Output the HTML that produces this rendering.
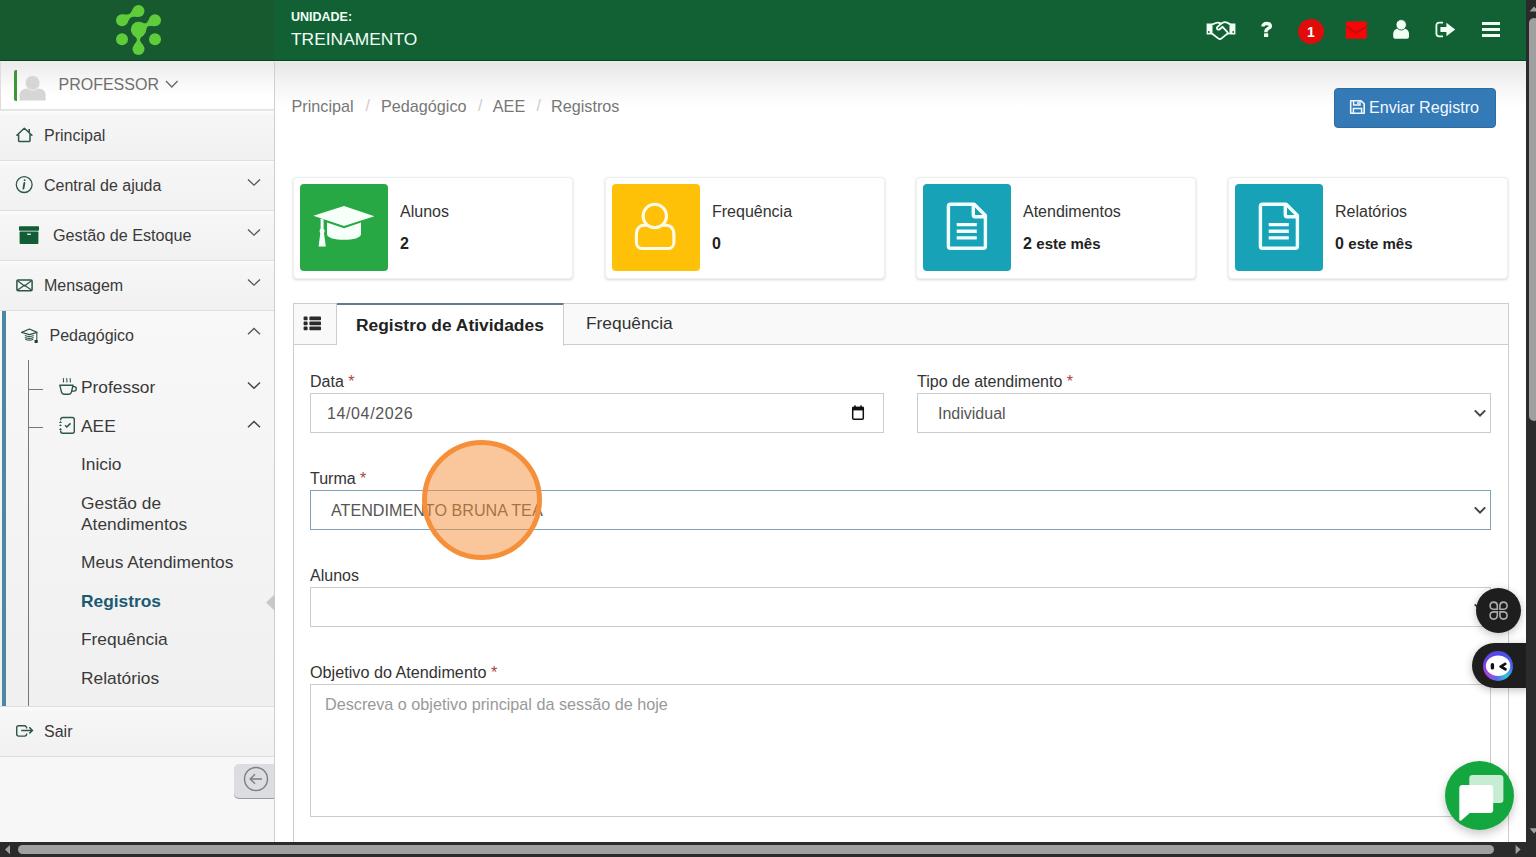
<!DOCTYPE html>
<html lang="pt">
<head>
<meta charset="utf-8">
<style>
*{box-sizing:border-box;margin:0;padding:0}
html,body{width:1536px;height:857px;overflow:hidden;background:#fff;font-family:"Liberation Sans",sans-serif;color:#333}
.a{position:absolute}
.nw{white-space:nowrap}
/* header */
#hdr{position:absolute;left:0;top:0;width:1526px;height:61px;background:#116135;border-bottom:1px solid #0c3f22}
#logo{position:absolute;left:0;top:0;width:274px;height:60px;background:#175a30}
.unid{left:291px;top:10px;color:#f2fff5;font-weight:bold;font-size:12.5px;line-height:14px}
.trein{left:291px;top:29px;color:#f2fff5;font-size:17.4px;line-height:20px}
/* sidebar */
#side{position:absolute;left:0;top:61px;width:275px;height:781px;background:#f7f7f7;border-right:1px solid #cfcfcf}
.prof{position:absolute;left:0;top:61px;width:274px;height:49px;background:linear-gradient(#ebebeb,#fff 70%);border-bottom:1px solid #e3e3e3;border-left:1px solid #ddd}
.mi{position:absolute;left:0;width:274px;height:50px;border-top:1px solid #dedede;background:linear-gradient(#fcfcfc,#f6f6f6 10%,#f1f1f1)}
.st{position:absolute;font-size:16px;color:#3a3a3a;line-height:18px;white-space:nowrap}
.sub{position:absolute;left:81px;font-size:17.35px;color:#3a3a3a;line-height:21px;white-space:nowrap}
.ico{position:absolute;overflow:visible}
/* main */
.topshade{left:275px;top:61px;width:1251px;height:46px;background:linear-gradient(#e6e6e6,#f3f3f3 45%,#fff)}
.crumb{top:97px;font-size:16.2px;color:#777;line-height:18px}
.sep{top:97px;font-size:16px;color:#ccc;line-height:18px}
.btn{left:1334px;top:88px;width:162px;height:40px;background:#337ab7;border-radius:4px;border:1px solid #2e6da4}
.card{position:absolute;top:177px;width:280px;height:101.5px;background:#fff;border:1px solid #efefef;border-radius:4px;box-shadow:0 1px 3px rgba(0,0,0,.16)}
.card .ib{position:absolute;left:6px;top:6px;width:88px;height:86.8px;border-radius:4px}
.card .l1{position:absolute;left:106px;top:25px;font-size:16px;color:#333;line-height:18px;white-space:nowrap}
.card .l2{position:absolute;left:106px;top:57px;font-size:16px;color:#222;font-weight:bold;line-height:18px;white-space:nowrap}
.card .l2 small{font-size:15px}
.panel{left:293px;top:303px;width:1216px;height:560px;border:1px solid #cdcdcd;background:#fff}
.tabbar{left:294px;top:304px;width:1214px;height:41px;background:#f9f9f9;border-bottom:1px solid #cdcdcd}
.lbl{position:absolute;font-size:16px;color:#333;line-height:18px;white-space:nowrap}
.lbl i{font-style:normal;color:#a94442}
.inp{position:absolute;border:1px solid #ccc;background:#fff}
.itxt{position:absolute;font-size:16px;color:#555;line-height:18px;white-space:nowrap}
/* scrollbars */
#vs{position:absolute;left:1526px;top:0;width:10px;height:857px;background:#2b2b2b}
#hs{position:absolute;left:0;top:842px;width:1526px;height:15px;background:#2b2b2b}
</style>
</head>
<body>
<!-- HEADER -->
<div id="hdr">
  <div id="logo"></div>
  <svg class="a" style="left:0;top:0" width="274" height="60" viewBox="0 0 274 60">
    <g fill="#5fcc3c">
      <circle cx="138.5" cy="11" r="6"/>
      <circle cx="122" cy="20.3" r="6"/>
      <circle cx="155" cy="20.3" r="6"/>
      <circle cx="138.5" cy="29.5" r="7.7"/>
      <circle cx="122" cy="39.2" r="6"/>
      <circle cx="155" cy="39.2" r="6"/>
      <circle cx="138.5" cy="49" r="6"/>
      <path d="M127.16 23.35 C130.71 16.46 130.71 16.46 138.44 17.00 L133.34 7.95 C129.79 14.84 129.79 14.84 122.06 14.30 Z"/>
      <path d="M145.43 32.86 C147.07 25.48 147.07 25.48 154.39 26.27 L149.60 17.68 C146.43 24.32 146.43 24.32 139.29 21.84 Z"/>
      <path d="M132.60 34.45 C138.18 39.25 138.18 39.25 133.90 45.14 L143.10 45.14 C138.82 39.25 138.82 39.25 144.40 34.45 Z"/>
    </g>
  </svg>
  <div class="a nw unid">UNIDADE:</div>
  <div class="a nw trein">TREINAMENTO</div>
  <!-- header icons -->
  <!-- handshake -->
  <svg class="ico" style="left:1205px;top:20px" width="32" height="21" viewBox="0 0 32 21">
    <path d="M1.6 3.6 H6.6 V14.6 H1.6 Z M25.4 3.6 H30.4 V14.6 H25.4 Z" fill="#f2fff5"/>
    <path d="M6.6 4.6 L11 3 C12.6 2.4 14 2.6 15.4 3.4 L16 3.8 L17.6 2.8 C19 2 20.6 2 22 2.6 L25.4 4.4 V13.4 L22.4 13.6 L16.6 18.4 C15.6 19.2 14.2 19.2 13.2 18.4 L6.6 13.2 Z" fill="none" stroke="#f2fff5" stroke-width="1.8" stroke-linejoin="round"/>
    <path d="M16 3.8 L12.2 7.2 C11.6 7.8 11.8 9 12.6 9.4 C13.4 9.8 14.4 9.6 15 9 L17.6 6.8 L22.4 12.2 C23 13 22.6 14 21.8 14" fill="none" stroke="#f2fff5" stroke-width="1.8" stroke-linejoin="round"/>
    <circle cx="3.8" cy="12" r="0.9" fill="#116135"/><circle cx="28.2" cy="12" r="0.9" fill="#116135"/>
  </svg>
  <!-- question -->
  <svg class="ico" style="left:1259px;top:19px" width="16" height="21" viewBox="1259 19 16 21">
    <path d="M1262.9 26.4 C1262.9 24.6 1264.6 23.5 1266.6 23.5 C1268.8 23.5 1270.4 24.6 1270.4 26.3 C1270.4 28.4 1266 28.6 1266 30.6 V32.3" fill="none" stroke="#f2fff5" stroke-width="3.4"/>
    <rect x="1264" y="33.2" width="4.2" height="3.8" rx="0.6" fill="#f2fff5"/>
  </svg>
  <!-- badge -->
  <div class="a" style="left:1298px;top:18.5px;width:25.6px;height:25.6px;border-radius:50%;background:#e10b0b"></div>
  <div class="a nw" style="left:1298px;top:24px;width:25.6px;text-align:center;font-size:14px;font-weight:bold;color:#fff;line-height:16px">1</div>
  <!-- envelope -->
  <svg class="ico" style="left:1345px;top:21px" width="23" height="19" viewBox="0 0 23 19">
    <rect x="0.8" y="0.6" width="21" height="17.2" rx="1.5" fill="#f80606"/>
    <path d="M1 5.4 L11.3 11.8 L21.6 5.4" fill="none" stroke="#b41212" stroke-width="1.8"/>
  </svg>
  <!-- user -->
  <svg class="ico" style="left:1392px;top:19px" width="18" height="21" viewBox="0 0 18 21">
    <path d="M1.2 17.8 V14.8 C1.2 11.8 3.6 9.4 6.4 9.4 H11.8 C14.6 9.4 17 11.8 17 14.8 V17.8 C17 18.9 16.1 19.8 15 19.8 H3.2 C2.1 19.8 1.2 18.9 1.2 17.8 Z" fill="#f2fff5"/>
    <circle cx="9.2" cy="5.8" r="5.2" fill="#f2fff5" stroke="#116135" stroke-width="0.9"/>
  </svg>
  <!-- sign out -->
  <svg class="ico" style="left:1435px;top:21px" width="21" height="17" viewBox="0 0 21 17">
    <path d="M8 1.6 H4.2 C2.6 1.6 1.4 2.8 1.4 4.4 V12.6 C1.4 14.2 2.6 15.4 4.2 15.4 H8" fill="none" stroke="#f2fff5" stroke-width="1.8"/>
    <path d="M5.4 6 H11.4 V1.8 L20.2 8.5 L11.4 15.2 V11 H5.4 Z" fill="#f2fff5"/>
  </svg>
  <!-- hamburger -->
  <div class="a" style="left:1482px;top:21.7px;width:18.3px;height:3.3px;background:#f2fff5"></div>
  <div class="a" style="left:1482px;top:27.8px;width:18.3px;height:3.3px;background:#f2fff5"></div>
  <div class="a" style="left:1482px;top:34px;width:18.3px;height:3.3px;background:#f2fff5"></div>
</div>

<!-- SIDEBAR -->
<div id="side"></div>
<div class="prof"></div>
<div class="a" style="left:14px;top:70px;width:3px;height:31px;background:#3e9638;border-radius:2px 0 0 2px"></div>
<svg class="ico" style="left:18px;top:74px" width="30" height="28" viewBox="0 0 30 28">
  <path d="M1.5 26.6 V21.5 C1.5 17 5 14.8 9 14.6 H20 C24.5 14.8 27.6 17 27.6 21.5 V26.6 Z" fill="#d6d6d6"/>
  <circle cx="14.6" cy="8.8" r="7.4" fill="#d6d6d6" stroke="#f6f6f6" stroke-width="0.9"/>
</svg>
<div class="st" style="left:58.5px;top:76px;color:#6f6f6f">PROFESSOR</div>
<svg class="ico" style="left:165px;top:79px" width="14" height="10" viewBox="0 0 14 10"><path d="M1 2 L6.8 8 L12.6 2" fill="none" stroke="#666" stroke-width="1.3"/></svg>

<!-- menu items -->
<div class="mi" style="top:110px;border-top-color:#e6e6e6"></div>
<div class="mi" style="top:160px"></div>
<div class="mi" style="top:210px"></div>
<div class="mi" style="top:260px"></div>
<div class="a" style="left:0;top:310px;width:274px;height:397px;border-top:1px solid #dedede;background:linear-gradient(#f8f8f8,#f0f0f0)"></div>
<div class="mi" style="top:706px"></div>
<div class="a" style="left:0;top:756px;width:274px;height:1px;background:#dedede"></div>

<!-- Principal -->
<svg class="ico" style="left:16px;top:127px" width="17" height="16" viewBox="0 0 17 16">
  <path d="M2.6 7.6 V13.4 C2.6 14.1 3.1 14.6 3.8 14.6 H12.8 C13.5 14.6 14 14.1 14 13.4 V7.6 M0.9 8.2 L8.3 1.2 L15.9 8.2" fill="none" stroke="#2c5646" stroke-width="1.5" stroke-linejoin="round" stroke-linecap="round"/>
  <path d="M12.4 2 H14 V6.2 L12.4 4.8 Z" fill="#2c5646"/>
</svg>
<div class="st" style="left:44px;top:127px">Principal</div>

<!-- Central de ajuda -->
<svg class="ico" style="left:15px;top:175px" width="19" height="19" viewBox="0 0 19 19">
  <circle cx="9.2" cy="9.6" r="7.9" fill="none" stroke="#2c5646" stroke-width="1.3"/>
  <path d="M9.6 5.2 h0.1 M9.4 8 L8.4 13.6" fill="none" stroke="#2c5646" stroke-width="1.8" stroke-linecap="round"/>
</svg>
<div class="st" style="left:44px;top:177px">Central de ajuda</div>
<svg class="ico" style="left:247px;top:178px" width="14" height="9" viewBox="0 0 14 9"><path d="M1 1.5 L7 7.2 L13 1.5" fill="none" stroke="#555" stroke-width="1.3"/></svg>

<!-- Gestao de Estoque -->
<svg class="ico" style="left:18px;top:225px" width="22" height="20" viewBox="0 0 22 20">
  <rect x="1" y="1.3" width="20" height="4.4" rx="0.8" fill="#115e36"/>
  <rect x="1.6" y="6.5" width="18.8" height="12.5" rx="0.8" fill="#115e36"/>
  <rect x="9.2" y="8.6" width="3.6" height="1.3" fill="#fff"/>
</svg>
<div class="st" style="left:53px;top:226px;font-size:16.2px">Gestão de Estoque</div>
<svg class="ico" style="left:247px;top:228px" width="14" height="9" viewBox="0 0 14 9"><path d="M1 1.5 L7 7.2 L13 1.5" fill="none" stroke="#555" stroke-width="1.3"/></svg>

<!-- Mensagem -->
<svg class="ico" style="left:15px;top:278px" width="19" height="14" viewBox="0 0 19 14">
  <rect x="1.9" y="1.9" width="15.2" height="10.8" rx="1.2" fill="none" stroke="#2c5646" stroke-width="1.5"/>
  <path d="M2.2 2.4 L9.5 8 L16.8 2.4 M2.2 12.2 L9.5 7.2 L16.8 12.2" fill="none" stroke="#2c5646" stroke-width="1.3"/>
</svg>
<div class="st" style="left:44px;top:277px">Mensagem</div>
<svg class="ico" style="left:247px;top:278px" width="14" height="9" viewBox="0 0 14 9"><path d="M1 1.5 L7 7.2 L13 1.5" fill="none" stroke="#555" stroke-width="1.3"/></svg>

<!-- Pedagogico -->
<div class="a" style="left:1.5px;top:311px;width:4.5px;height:395px;background:#4a88a3"></div>
<svg class="ico" style="left:21px;top:328px" width="18" height="16" viewBox="0 0 18 16">
  <path d="M0.6 4.4 L8.5 1 L16 4.3 L8.5 6.7 Z" fill="none" stroke="#2c5646" stroke-width="1.3" stroke-linejoin="round"/>
  <path d="M3.8 7.6 Q8.5 9.4 12.7 7.6 M3.8 9.5 Q8.5 11.3 12.7 9.5 M4.2 11.2 Q8.5 13 12.3 11.2" fill="none" stroke="#2c5646" stroke-width="1.1"/>
  <path d="M15.8 4.4 V12.4" stroke="#2c5646" stroke-width="1.1"/>
  <rect x="13.6" y="12" width="3.1" height="2.9" rx="0.4" fill="#1e3a2a"/>
</svg>
<div class="st" style="left:49.5px;top:327px">Pedagógico</div>
<svg class="ico" style="left:247px;top:327px" width="14" height="9" viewBox="0 0 14 9"><path d="M1 7.2 L7 1.5 L13 7.2" fill="none" stroke="#555" stroke-width="1.3"/></svg>

<!-- tree -->
<div class="a" style="left:28px;top:360px;width:1px;height:346px;background:#777"></div>
<div class="a" style="left:29px;top:389px;width:14px;height:1px;background:#777"></div>
<div class="a" style="left:29px;top:427px;width:14px;height:1px;background:#777"></div>

<!-- Professor -->
<svg class="ico" style="left:58px;top:377px" width="20" height="19" viewBox="0 0 20 19">
  <path d="M1.8 8.2 H15.1 L13.4 15.2 C13.1 16.4 12.3 17.2 11 17.2 H5.9 C4.6 17.2 3.8 16.4 3.5 15.2 Z" fill="none" stroke="#2c5646" stroke-width="1.4" stroke-linejoin="round"/>
  <path d="M14.8 9.6 H16.2 C17.6 9.6 18.3 10.6 18.3 11.8 C18.3 13.1 17.4 14.2 16 14.2 H13.9" fill="none" stroke="#2c5646" stroke-width="1.3"/>
  <path d="M5.6 1.2 C4.4 2.2 6.6 3.6 5.2 5.4 M9 1.2 C7.8 2.2 10 3.6 8.6 5.4 M12.4 1.2 C11.2 2.2 13.4 3.6 12 5.4" fill="none" stroke="#2c5646" stroke-width="1.1"/>
</svg>
<div class="sub" style="top:377px">Professor</div>
<svg class="ico" style="left:247px;top:381px" width="14" height="9" viewBox="0 0 14 9"><path d="M1 1.5 L7 7.2 L13 1.5" fill="none" stroke="#444" stroke-width="1.5"/></svg>

<!-- AEE -->
<svg class="ico" style="left:58px;top:416px" width="18" height="19" viewBox="0 0 18 19">
  <path d="M2.7 4.2 V3.5 C2.7 2.4 3.6 1.5 4.7 1.5 H14.3 C15.4 1.5 16.3 2.4 16.3 3.5 V15.2 C16.3 16.3 15.4 17.2 14.3 17.2 H4.7 C3.6 17.2 2.7 16.3 2.7 15.2 V14.4" fill="none" stroke="#2c5646" stroke-width="1.4"/>
  <path d="M0.9 6.9 L2.45 5.1 L4 6.9 Z M0.9 10.1 L2.45 8.3 L4 10.1 Z M0.9 13.9 L2.45 12.1 L4 13.9 Z" fill="#2c5646"/>
  <path d="M7.1 9.3 L8.8 11 L12.5 7.4" fill="none" stroke="#2c5646" stroke-width="1.6"/>
</svg>
<div class="sub" style="top:416px">AEE</div>
<svg class="ico" style="left:247px;top:420px" width="14" height="9" viewBox="0 0 14 9"><path d="M1 7.2 L7 1.5 L13 7.2" fill="none" stroke="#444" stroke-width="1.5"/></svg>

<div class="sub" style="top:454px">Inicio</div>
<div class="sub" style="top:493px">Gestão de<br>Atendimentos</div>
<div class="sub" style="top:552px">Meus Atendimentos</div>
<div class="sub" style="top:591px;font-weight:bold;color:#1b5a72">Registros</div>
<div class="sub" style="top:629px">Frequência</div>
<div class="sub" style="top:668px">Relatórios</div>
<svg class="ico" style="left:265px;top:594px" width="10" height="17" viewBox="0 0 10 17"><path d="M10 0 L1 8.5 L10 17 Z" fill="#c8c8c8"/></svg>

<!-- Sair -->
<svg class="ico" style="left:15px;top:722px" width="19" height="16" viewBox="0 0 19 16">
  <path d="M11.6 6.4 V5.8 C11.6 4.7 10.7 3.8 9.6 3.8 H3.7 C2.6 3.8 1.7 4.7 1.7 5.8 V12.1 C1.7 13.2 2.6 14.1 3.7 14.1 H9.6 C10.7 14.1 11.6 13.2 11.6 12.1 V11.5" fill="none" stroke="#2c5646" stroke-width="1.4"/>
  <path d="M6.2 8.4 H16.6 M14.3 5.2 L17.4 8.4 L14.3 11.6" fill="none" stroke="#2c5646" stroke-width="1.5"/>
</svg>
<div class="st" style="left:44px;top:723px">Sair</div>

<!-- collapse -->
<div class="a" style="left:234px;top:764px;width:40px;height:34px;background:#dcdde3;border-radius:5px 0 0 5px;box-shadow:0 1px 0 rgba(0,0,0,.38)"></div>
<svg class="ico" style="left:243px;top:766px" width="26" height="26" viewBox="0 0 26 26">
  <circle cx="13" cy="13" r="11.5" fill="none" stroke="#7e7e7e" stroke-width="1.4"/>
  <path d="M19 13 H7.4 M12 8.2 L7.2 13 L12 17.8" fill="none" stroke="#7e7e7e" stroke-width="1.4"/>
</svg>

<!-- MAIN -->
<div class="a" style="left:0;top:61px;width:1526px;height:1px;background:#e4f3e6;z-index:5"></div>
<div class="a topshade"></div>
<div class="a nw crumb" style="left:291.5px">Principal</div>
<div class="a nw sep" style="left:365.5px">/</div>
<div class="a nw crumb" style="left:381px">Pedagógico</div>
<div class="a nw sep" style="left:478px">/</div>
<div class="a nw crumb" style="left:492.8px">AEE</div>
<div class="a nw sep" style="left:536.5px">/</div>
<div class="a nw crumb" style="left:551px">Registros</div>
<div class="a btn"></div>
<svg class="ico" style="left:1349px;top:99px" width="17" height="16" viewBox="0 0 17 16">
  <path d="M1.7 1.7 H12 L15.2 4.9 V14.3 H1.7 Z" fill="none" stroke="#eef6ff" stroke-width="1.6" stroke-linejoin="round"/>
  <path d="M4.6 2 V6 H11 V2" fill="none" stroke="#eef6ff" stroke-width="1.5"/>
  <rect x="8.2" y="2.6" width="1.6" height="2.6" fill="#eef6ff"/>
  <path d="M4.4 14 V9.6 H12.6 V14" fill="none" stroke="#eef6ff" stroke-width="1.5"/>
</svg>
<div class="a nw" style="left:1369px;top:98px;font-size:16.1px;color:#f3f8ff;line-height:18px">Enviar Registro</div>

<div class="card" style="left:293px"><div class="ib" style="background:#28a745">
  <svg class="ico" style="left:0;top:0" width="88" height="86" viewBox="0 0 88 86" fill="#f6fff8">
    <path d="M13.3 31.8 L44 22 L74.4 32.2 L44 42.1 Z"/>
    <path d="M27 38.4 L44 44.2 L61 38.5 V50 C61 54 53 55.8 44 55.8 C35 55.8 27 54 27 50 Z"/>
    <path d="M20.6 34.6 L23.6 35.6 V46.6 L25.8 62.6 H18.6 L20.6 46.6 Z"/>
    <circle cx="22.1" cy="47" r="2.5"/>
  </svg></div><div class="l1">Alunos</div><div class="l2">2</div></div>
<div class="card" style="left:605px"><div class="ib" style="background:#ffc107">
  <svg class="ico" style="left:0;top:0" width="88" height="86" viewBox="0 0 88 86" fill="none" stroke="#fffbea" stroke-width="3.1">
    <circle cx="42.8" cy="32" r="11.7"/>
    <path d="M35 41.2 H32 C27.5 41.2 24.4 45 24.4 50 V58.5 C24.4 62 26.8 64.5 30 64.5 H56.4 C59.4 64.5 61.9 62 61.9 58.5 V50 C61.9 45 58.8 41.2 54.3 41.2 H50.6"/>
  </svg></div><div class="l1">Frequência</div><div class="l2">0</div></div>
<div class="card" style="left:916px"><div class="ib" style="background:#17a2b8">
  <svg class="ico" style="left:0;top:0" width="88" height="86" viewBox="0 0 88 86" fill="none" stroke="#f2fdff" stroke-width="3.4">
    <path d="M27.5 20.3 H51.2 L62.4 31.5 V62.2 C62.4 63.4 61.5 64.3 60.3 64.3 H27.5 C26.3 64.3 25.4 63.4 25.4 62.2 V22.4 C25.4 21.2 26.3 20.3 27.5 20.3 Z" stroke-linejoin="round"/>
    <path d="M50.3 20.6 V31 C50.3 32 51 32.7 52 32.7 H62.2"/>
    <path d="M33.7 40.6 H53.8 M33.7 47.3 H53.8 M33.7 53.9 H53.8"/>
  </svg></div><div class="l1">Atendimentos</div><div class="l2">2 <small>este mês</small></div></div>
<div class="card" style="left:1228px"><div class="ib" style="background:#17a2b8">
  <svg class="ico" style="left:0;top:0" width="88" height="86" viewBox="0 0 88 86" fill="none" stroke="#f2fdff" stroke-width="3.4">
    <path d="M27.5 20.3 H51.2 L62.4 31.5 V62.2 C62.4 63.4 61.5 64.3 60.3 64.3 H27.5 C26.3 64.3 25.4 63.4 25.4 62.2 V22.4 C25.4 21.2 26.3 20.3 27.5 20.3 Z" stroke-linejoin="round"/>
    <path d="M50.3 20.6 V31 C50.3 32 51 32.7 52 32.7 H62.2"/>
    <path d="M33.7 40.6 H53.8 M33.7 47.3 H53.8 M33.7 53.9 H53.8"/>
  </svg></div><div class="l1">Relatórios</div><div class="l2">0 <small>este mês</small></div></div>

<div class="a panel"></div>
<div class="a tabbar"></div>
<!-- tabs -->
<div class="a" style="left:336px;top:304px;width:1px;height:41px;background:#cdcdcd"></div>
<svg class="ico" style="left:303px;top:316px" width="19" height="15" viewBox="0 0 19 15" fill="#2a2a2a">
  <rect x="0.6" y="0.6" width="4" height="3.6" rx="0.8"/><rect x="6.4" y="0.6" width="11.6" height="3.6" rx="0.8"/>
  <rect x="0.6" y="5.6" width="4" height="3.6" rx="0.8"/><rect x="6.4" y="5.6" width="11.6" height="3.6" rx="0.8"/>
  <rect x="0.6" y="10.6" width="4" height="3.6" rx="0.8"/><rect x="6.4" y="10.6" width="11.6" height="3.6" rx="0.8"/>
</svg>
<div class="a" style="left:337px;top:302.5px;width:227px;height:43px;background:#fff;border-top:2px solid #5b7e8c;border-right:1px solid #cdcdcd"></div>
<div class="a nw" style="left:356px;top:315px;font-size:17.4px;font-weight:bold;color:#222;line-height:20px">Registro de Atividades</div>
<div class="a nw" style="left:586px;top:313px;font-size:17.35px;color:#333;line-height:20px">Frequência</div>

<!-- form -->
<div class="lbl" style="left:310px;top:373px">Data <i>*</i></div>
<div class="inp" style="left:310px;top:393px;width:574px;height:40px"></div>
<div class="itxt" style="left:327px;top:405px;letter-spacing:0.62px">14/04/2026</div>
<svg class="ico" style="left:851px;top:404px" width="14" height="17" viewBox="0 0 14 17">
  <rect x="1.7" y="3.4" width="10.6" height="11.8" rx="1" fill="none" stroke="#111" stroke-width="1.5"/>
  <rect x="1.2" y="2.8" width="11.6" height="3.6" fill="#111"/>
  <rect x="3.2" y="1.4" width="1.6" height="2" fill="#111"/><rect x="9.2" y="1.4" width="1.6" height="2" fill="#111"/>
</svg>

<div class="lbl" style="left:917px;top:373px">Tipo de atendimento <i>*</i></div>
<div class="inp" style="left:917px;top:393px;width:574px;height:40px"></div>
<div class="itxt" style="left:938px;top:405px">Individual</div>
<svg class="ico" style="left:1473px;top:408px" width="14" height="10" viewBox="0 0 14 10"><path d="M1.8 2.4 L7 7.6 L12.2 2.4" fill="none" stroke="#444" stroke-width="2"/></svg>

<div class="lbl" style="left:310px;top:470px">Turma <i>*</i></div>
<div class="inp" style="left:310px;top:490px;width:1181px;height:40px;border-color:#7fa2b6"></div>
<div class="itxt" style="left:331px;top:501px;font-size:16.15px">ATENDIMENTO BRUNA TEA</div>
<svg class="ico" style="left:1473px;top:505px" width="14" height="10" viewBox="0 0 14 10"><path d="M1.8 2.4 L7 7.6 L12.2 2.4" fill="none" stroke="#444" stroke-width="2"/></svg>

<div class="lbl" style="left:310px;top:567px">Alunos</div>
<div class="inp" style="left:310px;top:587px;width:1181px;height:40px"></div>
<svg class="ico" style="left:1473px;top:602px" width="14" height="10" viewBox="0 0 14 10"><path d="M1.8 2.4 L7 7.6 L12.2 2.4" fill="none" stroke="#444" stroke-width="2"/></svg>

<div class="lbl" style="left:310px;top:663px;font-size:16.2px">Objetivo do Atendimento <i>*</i></div>
<div class="inp" style="left:310px;top:684px;width:1181px;height:133px"></div>
<div class="itxt" style="left:325px;top:695px;color:#999;font-size:16.2px">Descreva o objetivo principal da sessão de hoje</div>

<!-- orange click marker -->
<div class="a" style="left:422.3px;top:440.3px;width:120.2px;height:120.2px;border-radius:50%;border:5.7px solid #f68f3a;background:rgba(246,143,58,.5)"></div>

<!-- floating widgets -->
<div class="a" style="left:1476px;top:587.7px;width:45px;height:45px;border-radius:50%;background:#1e1e1e;box-shadow:0 2px 8px rgba(0,0,0,.25)"></div>
<svg class="ico" style="left:1487.5px;top:599.5px" width="21" height="21" viewBox="0 0 21 21" fill="none" stroke="#acacac" stroke-width="1.6">
  <path d="M9.3 9.3 H5.4 A3.6 3.6 0 1 1 9.3 5.4 Z"/>
  <path d="M11.9 9.3 H15.8 A3.6 3.6 0 1 0 11.9 5.4 Z"/>
  <path d="M9.3 11.9 H5.4 A3.6 3.6 0 1 0 9.3 15.8 Z"/>
  <path d="M11.9 11.9 H15.8 A3.6 3.6 0 1 1 11.9 15.8 Z"/>
</svg>
<div class="a" style="left:1472.3px;top:643px;width:60px;height:45px;border-radius:22.5px 0 0 22.5px;background:#1e1e1e;box-shadow:0 2px 8px rgba(0,0,0,.25)"></div>
<div class="a" style="left:1483px;top:651px;width:30px;height:30px;border-radius:50%;background:conic-gradient(from 0deg,#5048e8 0deg,#4a5cf0 90deg,#30c4e2 140deg,#5a6ae8 185deg,#b040d8 235deg,#7040e0 290deg,#5048e8 360deg)"></div>
<svg class="ico" style="left:1482px;top:650px" width="32" height="32" viewBox="0 0 32 32">
  <ellipse cx="16.1" cy="15.8" rx="12.2" ry="10.3" fill="#fff"/>
  <rect x="8.7" y="13.1" width="3.4" height="6.5" rx="1.7" fill="#111"/>
  <path d="M23.2 13.9 L18.7 16.6 L23.4 19.2" fill="none" stroke="#111" stroke-width="2.8" stroke-linecap="round" stroke-linejoin="round"/>
</svg>

<!-- chat button -->
<div class="a" style="left:1445px;top:761px;width:69px;height:69px;border-radius:50%;background:#14a63f;box-shadow:0 4px 10px rgba(0,0,0,.22)"></div>
<svg class="ico" style="left:1455px;top:771px" width="52" height="52" viewBox="1455 771 52 52">
  <path d="M1472.3 775.1 H1500.4 C1502.1 775.1 1503.4 776.4 1503.4 778.1 V800.1 C1503.4 801.8 1502.1 803.1 1500.4 803.1 H1472.3 C1470.6 803.1 1469.3 801.8 1469.3 800.1 V778.1 C1469.3 776.4 1470.6 775.1 1472.3 775.1 Z" fill="#c6ecd1"/>
  <path d="M1462.3 785 H1490.2 C1491.9 785 1493.2 786.3 1493.2 788 V810 C1493.2 811.7 1491.9 813 1490.2 813 H1469.8 L1461.2 820.6 C1460.6 821 1459.3 820.8 1459.3 819.8 V788 C1459.3 786.3 1460.6 785 1462.3 785 Z" fill="#fff"/>
</svg>



<div id="vs"></div>
<div id="hs"></div>
<!-- scrollbar details -->
<div class="a" style="left:1529px;top:17.5px;width:10px;height:403px;border-radius:5px;background:#a0a0a0"></div>
<svg class="ico" style="left:1529px;top:0" width="10" height="16" viewBox="0 0 10 16"><path d="M5 6.5 L10 11.6 H0.6 Z" fill="#a0a0a0"/></svg>
<svg class="ico" style="left:1529px;top:825px" width="10" height="16" viewBox="0 0 10 16"><path d="M5 8.6 L10 3.3 H0.6 Z" fill="#a0a0a0"/></svg>
<div class="a" style="left:18px;top:845px;width:1476px;height:9px;border-radius:4.5px;background:#a0a0a0"></div>
<svg class="ico" style="left:0;top:842px" width="15" height="15" viewBox="0 0 15 15"><path d="M5 7.6 L10 3 V12.2 Z" fill="#a0a0a0"/></svg>
<svg class="ico" style="left:1510px;top:842px" width="15" height="15" viewBox="0 0 15 15"><path d="M10.6 7.6 L5.6 3 V12.2 Z" fill="#a0a0a0"/></svg>
</body>
</html>
